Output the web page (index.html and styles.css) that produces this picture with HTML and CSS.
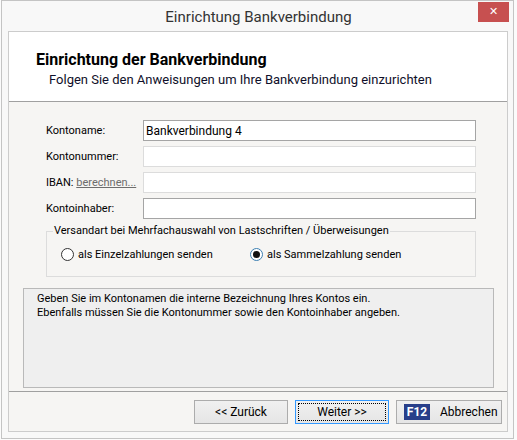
FILE: index.html
```html
<!DOCTYPE html>
<html lang="de">
<head>
    <meta charset="UTF-8">
    <title>Einrichtung Bankverbindung</title>
    <link rel="stylesheet" href="styles.css">
</head>
<body>
    <div class="window">
        <div class="titlebar">
            <span></span>
            <span class="title">Einrichtung Bankverbindung</span>
            <button class="close" type="button">&#x2715;</button>
        </div>

        <div class="client">
            <div class="header">
                <h1>Einrichtung der Bankverbindung</h1>
                <p>Folgen Sie den Anweisungen um Ihre Bankverbindung einzurichten</p>
            </div>

            <div class="content">
                <div class="form">
                    <label for="kontoname">Kontoname:</label>
                    <input id="kontoname" class="field" type="text" value="Bankverbindung 4">

                    <label for="kontonummer">Kontonummer:</label>
                    <input id="kontonummer" class="field light" type="text">

                    <label for="iban">IBAN: <a href="#" class="calc">berechnen...</a></label>
                    <input id="iban" class="field light" type="text">

                    <label for="inhaber">Kontoinhaber:</label>
                    <input id="inhaber" class="field" type="text">
                </div>

                <fieldset class="group">
                    <legend>Versandart bei Mehrfachauswahl von Lastschriften / Überweisungen</legend>
                    <div class="radios">
                        <span class="radio"><i class="dot"></i>als Einzelzahlungen senden</span>
                        <span class="radio checked"><i class="dot"></i>als Sammelzahlung senden</span>
                    </div>
                </fieldset>

                <div class="info">
                    Geben Sie im Kontonamen die interne Bezeichnung Ihres Kontos ein.<br>
                    Ebenfalls müssen Sie die Kontonummer sowie den Kontoinhaber angeben.
                </div>
            </div>

            <div class="footer">
                <button class="btn" type="button">&lt;&lt; Zurück</button>
                <button class="btn default" type="button"><span class="focus">Weiter &gt;&gt;</span></button>
                <button class="btn cancel" type="button"><span class="key">F12</span>Abbrechen</button>
            </div>
        </div>
    </div>
</body>
</html>
```

FILE: styles.css
```css
body {
    margin: 0;
    background-color: #fbfbfb;
    font-family: Roboto, "Noto Sans", sans-serif;
    font-size: 11px;
    color: #000;
}

.window {
    box-sizing: border-box;
    width: 513px;
    height: 439px;
    margin-left: 1px;
    padding: 0 5px 6px 6px;
    background-color: #f8f8f8;
    border: 1px solid #c4c4c4;
    display: flex;
    flex-direction: column;
}

/* title bar */
.titlebar {
    height: 30px;
    display: grid;
    grid-template-columns: 1fr auto 1fr;
    align-items: start;
}

.title {
    font-size: 15px;
    color: #333;
    line-height: 32px;
    padding-left: 1px;
}

.close {
    justify-self: end;
    width: 31px;
    height: 20px;
    margin: 1px -1px 0 0;
    padding: 0;
    border: none;
    background-color: #c75050;
    color: #fff;
    font-size: 11px;
    font-weight: bold;
    line-height: 20px;
    font-family: "DejaVu Sans", sans-serif;
}

/* dialog body */
.client {
    flex: 1;
    border: 1px solid #cccccc;
    display: flex;
    flex-direction: column;
    background-color: #f6f5f3;
}

.header {
    height: 69px;
    background-color: #fff;
    border-bottom: 1px solid #a0a0a0;
    box-sizing: content-box;
    padding-left: 27px;
}

.header h1 {
    margin: 19px 0 0;
    font-size: 16px;
    line-height: 18px;
    font-weight: bold;
}

.header p {
    margin: 2px 0 0 13px;
    font-size: 13px;
    line-height: 17px;
    color: #10102a;
}

.content {
    height: 290px;
    box-sizing: border-box;
    padding: 18px 13px 0 14px;
    border-bottom: 1px solid #a0a0a0;
}

.form {
    display: grid;
    grid-template-columns: 97px 333px;
    row-gap: 5px;
    margin-left: 23px;
    align-items: center;
}

.form label {
    white-space: nowrap;
}

.calc {
    color: #6d6d6d;
}

.field {
    box-sizing: border-box;
    height: 21px;
    margin: 0;
    padding: 0 2px;
    border: 1px solid #a5a5a5;
    background-color: #fff;
    font-family: inherit;
    font-size: 12px;
    outline: none;
}

.field.light {
    border-color: #dcdcdc;
}

.group {
    width: 430px;
    box-sizing: border-box;
    margin: 4px 0 0 23px;
    padding: 0 6px 9px;
    border: 1px solid #dcdcdc;
    height: 54px;
}

.group legend {
    padding: 0 1px;
    line-height: 16px;
}

.radios {
    display: flex;
    padding: 9px 0 0 8px;
}

.radio {
    display: flex;
    align-items: center;
    gap: 4px;
    width: 189px;
}

.dot {
    width: 11px;
    height: 11px;
    border: 1px solid #333;
    border-radius: 50%;
    background-color: #fff;
    position: relative;
}

.checked .dot {
    border-color: #3c7fb1;
}

/* the filled centre of the selected option */
.checked .dot::after {
    content: "";
    position: absolute;
    left: 2px;
    top: 2px;
    width: 7px;
    height: 7px;
    border-radius: 50%;
    background-color: #111;
}

.info {
    height: 100px;
    box-sizing: border-box;
    margin-top: 11px;
    padding: 3px 13px;
    background-color: #efefef;
    border: 1px solid #b9b9b9;
    line-height: 14px;
}

/* buttons */
.footer {
    flex: 1;
    display: flex;
    justify-content: flex-end;
    align-items: flex-start;
    gap: 7px;
    padding: 8px 5px 0 0;
}

.btn {
    box-sizing: border-box;
    width: 94px;
    height: 24px;
    padding: 0;
    border: 1px solid #acacac;
    background: linear-gradient(#f0f0f0, #e5e5e5);
    font-family: inherit;
    font-size: 12px;
    color: #000;
    display: flex;
    align-items: center;
    justify-content: center;
}

.btn.default {
    border-color: #3399ff;
    padding: 2px;
}

.focus {
    flex: 1;
    align-self: stretch;
    display: flex;
    align-items: center;
    justify-content: center;
    border: 1px dotted #000;
}

.btn.cancel {
    width: 106px;
    justify-content: flex-start;
    padding-left: 7px;
    gap: 10px;
}

.key {
    background-color: #283f8a;
    color: #fff;
    font-weight: bold;
    width: 26px;
    height: 16px;
    line-height: 16px;
    text-align: center;
}
```
